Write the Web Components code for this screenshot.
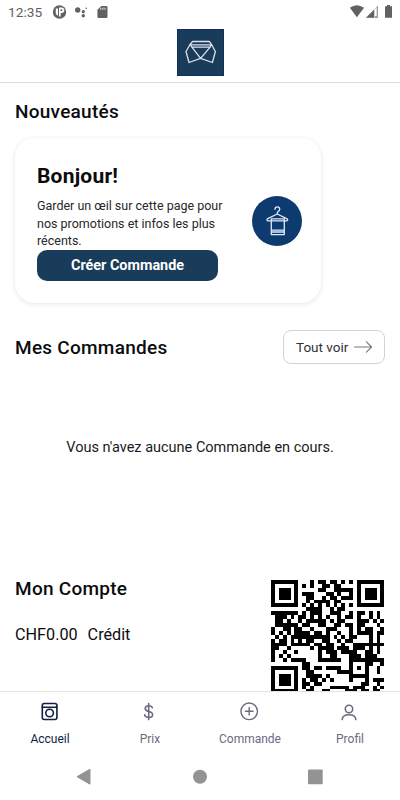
<!DOCTYPE html>
<html lang="fr"><head><meta charset="utf-8"><title>Accueil</title>
<style>html,body{margin:0;height:100%;background:#fff;overflow:hidden}body{font-family:Roboto,"Liberation Sans",sans-serif;color:#0b0c0e}</style></head>
<body>
<app-screen>
  <status-bar slot="top"></status-bar>
  <app-header slot="top"></app-header>
  <section-title style="margin-top:18px">Nouveautés</section-title>
  <news-card></news-card>
  <section-title style="margin-top:34px">Mes Commandes<view-all slot="action">Tout voir</view-all></section-title>
  <empty-note>Vous n'avez aucune Commande en cours.</empty-note>
  <account-panel></account-panel>
  <tab-bar slot="bottom"></tab-bar>
  <system-nav slot="bottom"></system-nav>
</app-screen>
<script>
const define=(name,html,after)=>customElements.define(name,class extends HTMLElement{
  connectedCallback(){if(this.shadowRoot)return;const t=document.createElement('template');t.innerHTML=html;
    const r=this.attachShadow({mode:'open'});r.append(t.content.cloneNode(true));if(after)after(r)}});

define('app-screen',`<style>:host{display:flex;flex-direction:column;width:400px;height:800px;overflow:hidden}
main{flex:1;min-height:0;overflow:hidden;padding:0 15px}</style><slot name="top"></slot><main><slot></slot></main><slot name="bottom"></slot>`);

define('status-bar',`<style>:host{display:flex;height:24px;align-items:center;padding:0 6px 0 8px;box-sizing:border-box;color:#616161;font-size:13.7px}
span{letter-spacing:.05px}.l{margin-left:10px}.r{margin-left:auto}svg{display:block}</style>
<span>12:35</span>
<svg class="l" width="58" height="24" fill="#616161"><circle cx="7.5" cy="12" r="6.7"/><path d="M3.8 8.5h2.2v7.2l-2.2-1.8zM7 7.5h2.6a2.6 2.6 0 0 1 0 5.4H8.7v3.6H7z" fill="#fff"/><circle cx="9.4" cy="10.2" r="1" fill="#616161"/>
<circle cx="25.7" cy="10" r="2.7"/><circle cx="31.3" cy="11.7" r="1.6"/><circle cx="31.3" cy="15.7" r="1.7"/><circle cx="34.2" cy="8.2" r=".8"/>
<path d="M49.3 5.9h5q1.2 0 1.2 1.2v9.7q0 1.2-1.2 1.2h-7.7q-1.2 0-1.2-1.2V9.7z"/><path d="M48.8 7.7v2M50.9 7.7v2M53 7.7v2" stroke="#fff" stroke-width=".9"/></svg>
<svg class="r" width="46" height="24" fill="#616161"><path d="M1.8 7.8q7-5 14.2 0L8.9 17.3z"/><path d="M29.8 5.8V17.8H18z" fill="#c4c4c4"/><path d="M26 9.8v8h-8z"/><path d="M26.8 9.8l2-2v8.2h-2z" fill="#fff"/><path d="M28.8 6.8l1-1v12h-3v-1.2h2z" fill="#8c8c8c"/><path d="M37 6.3h2V5h3v1.3h2v11.5h-7z"/></svg>`);

define('app-header',`<style>:host{display:flex;justify-content:center;height:59px;box-sizing:border-box;border-bottom:1.5px solid #dedede;padding-top:5px}
div{width:47px;height:47px;box-sizing:border-box;background:#193c5b;border:1px solid #10305a}svg{display:block}</style>
<div><svg width="45" height="45" viewBox="1 1 45 45" fill="none" stroke="#dce1eb" stroke-width="1.3" stroke-linejoin="round"><path d="M15.6 12.5h16.6l2.2 2.7-1.3 3H14.9l-1.7-3zM13.8 15.9h20M13.2 15.2L9 22.5l3 11L23.6 29.3 14.9 18.2M34.4 15.2l4 7.3-3 11-11.8-4.2L33.1 18.2"/></svg></div>`);

define('section-title',`<style>:host{display:flex;align-items:center;justify-content:space-between;height:22px;font-size:19px;font-weight:500;letter-spacing:.26px;line-height:22px;white-space:nowrap}</style><span><slot></slot></span><slot name="action"></slot>`);

define('view-all',`<style>:host{display:flex;align-items:center;box-sizing:border-box;width:102px;height:34px;border:1px solid #d2d3d6;border-radius:8px;padding-left:12px;gap:6px;font-size:13.5px;font-weight:400;letter-spacing:0;color:#303134;margin-top:-3px}svg{display:block}</style>
<slot></slot><svg width="19" height="14" fill="none" stroke="#77787b" stroke-width="1.1" stroke-linecap="round" stroke-linejoin="round"><path d="M.6 7H17.5M12.4 1.8L17.6 7l-5.2 5.2"/></svg>`);

define('news-card',`<style>:host{display:flex;align-items:center;box-sizing:border-box;width:306px;height:165px;margin-top:15px;padding:0 19px 0 22px;border-radius:20px;background:#fff;box-shadow:0 1px 5px rgba(0,0,0,.11)}
section{width:216px;height:115px;display:flex;flex-direction:column}h2{margin:0;font-size:21px;line-height:26px;font-weight:700;letter-spacing:.22px}
p{margin:8px 0 0;font-size:12.5px;line-height:17.7px;color:#27282b;white-space:nowrap}
button{font:700 14.4px/31px Roboto,sans-serif;width:181px;height:31px;margin:0;padding:0;border:0;border-radius:10px;background:#193c5b;color:#fff}
svg{display:block;flex:none}</style>
<section><h2>Bonjour!</h2><p>Garder un œil sur cette page pour<br>nos promotions et infos les plus<br>récents.</p><button>Créer Commande</button></section>
<svg width="50" height="50" fill="none" stroke="#e0e8fa" stroke-width="1.3" stroke-linejoin="round" stroke-linecap="round"><circle cx="25" cy="25" r="25" fill="#0d3b70" stroke="none"/>
<path d="M23 13.3q0-2.4 2.3-2.4 2.4 0 2.4 2.3 0 1.5-1.5 2.2-1 .5-1 2.6l10 4.8q1.2 1.7-.6 2H16q-1.8-.3-.7-2l9.9-4.8M19.3 22.9h13v15.7h-13zM19.3 34.2h13M19.3 36h13"/></svg>`);

define('empty-note',`<style>:host{display:flex;align-items:center;justify-content:center;height:219px;box-sizing:border-box;padding-bottom:42px;font-size:14.5px;color:#1a1b1d;white-space:nowrap}</style><slot></slot>`);

const ROWS=`11111110001011011010101111111
10000010101001101100001000001
10111010000011001111101011101
10111010111000110100101011101
10111010011001011011101011101
10000010010111101100001000001
11111110101010101010101111111
00000000011110010110000000000
11111110101110011100101101010
01110101101010100101101001010
01101001011111010110001110101
01111110110011001101101100010
10011011001000111000101011001
10101011110110100100101111011
01010111111111101010110001010
10110101011001100101100001010
11110111110110110010011111111
11001000001011110111011101010
10010010000010111011110011010
10101000000010011000111011100
10010111100011111100111111111
00000000110000000000100011001
11111110110110111100101010010
10000010011000000111100010010
10111010011110100000111110000
10111010101101010000100010111
10111010110110000000000110010
10000010101000011111011100101
11111110011001100001110110110`.split('\n');
define('qr-code',`<style>:host{display:block}svg{display:block}</style><svg width="113.4" height="113.4" viewBox="0 0 29 29" shape-rendering="crispEdges"><path/></svg>`,r=>{
  let d='';ROWS.forEach((l,y)=>[...l].forEach((c,x)=>{if(c==='1')d+='M'+x+' '+y+'h1v1h-1z'}));
  r.querySelector('path').setAttribute('d',d)});

define('account-panel',`<style>:host{display:flex;justify-content:space-between;padding-right:1px}p{display:flex;gap:10px;margin:25px 0 0;font-size:16.2px;line-height:20px}qr-code{margin-top:2px}</style>
<section><section-title>Mon Compte</section-title><p><span>CHF0.00</span><span>Crédit</span></p></section><qr-code></qr-code>`);

define('tab-bar',`<style>:host{display:grid;grid-template-columns:repeat(4,1fr);height:63px;box-sizing:border-box;border-top:1.5px solid #e2e2e2;background:#fff;color:#6c6982;font-size:12px}
div{display:flex;flex-direction:column;align-items:center;padding-top:8px;gap:7px;line-height:16px}.on{color:#101e46}svg{display:block;fill:none;stroke:currentColor;stroke-width:1.6;stroke-linecap:round}</style>
<div class="on"><svg width="24" height="24"><rect x="4.3" y="3.5" width="14.6" height="16" rx="2"/><path d="M4.3 7.2h14.6"/><circle cx="11.6" cy="13" r="3.8"/></svg>Accueil</div>
<div><svg width="24" height="24"><path d="M10.7 3.6v16M14.3 7.8q-.5-2-3.6-2-3.5 0-3.5 2.7 0 2.2 3.5 3 3.9.8 3.9 3.2 0 2.7-3.9 2.7-3.5 0-4-2.5"/></svg>Prix</div>
<div><svg width="24" height="24" style="stroke-width:1.4"><circle cx="11.2" cy="11.3" r="8.3"/><path d="M7.4 11.3H15M11.2 7.5v7.6"/></svg>Commande</div>
<div><svg width="24" height="24"><circle cx="11" cy="9" r="3.7"/><path d="M4.2 19.6q.1-4.9 6.8-4.9t6.8 4.9"/></svg>Profil</div>`);

define('system-nav',`<style>:host{display:flex;height:46px;box-sizing:border-box;padding:0 0 0 76px;background:#fff}svg{display:block}</style>
<svg width="250" height="46" fill="#939393"><path d="M1 22.7L14 15.2v15z" stroke="#939393" stroke-linejoin="round"/><circle cx="124" cy="22.7" r="7"/><rect x="232" y="15.5" width="14.7" height="14.7" rx="1"/></svg>`);
</script></body></html>
